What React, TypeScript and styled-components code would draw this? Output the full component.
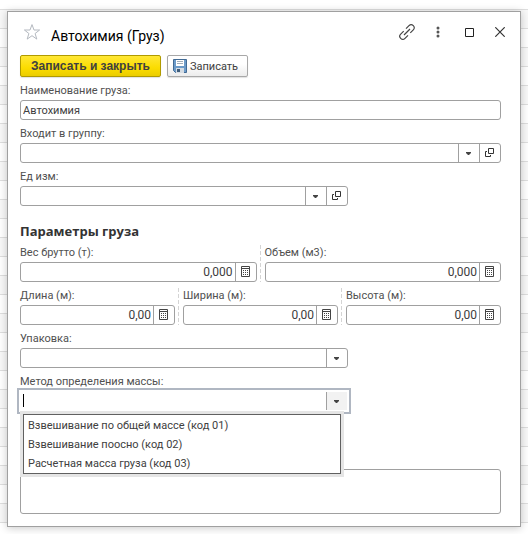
import React, { useId } from "react";
import styled, { createGlobalStyle, css } from "styled-components";

const GlobalStyle = createGlobalStyle`
  *, *::before, *::after { box-sizing: border-box; }
  body {
    margin: 0;
    background: #fff;
    color: #404040;
    font: 11px/17px Roboto, "Liberation Sans", sans-serif;
  }
  button, input, select, textarea { font: inherit; color: inherit; }
`;

const Backdrop = styled.main`
  display: flow-root;
  margin: 9px 0 11px;
  padding: 2px 7px 0;
  background: repeating-linear-gradient(
    #dedede 0 1px,
    #f8f8f8 1px 19px,
    #dedede 19px 20px,
    #fff 20px 38px
  );
`;

const Window = styled.section`
  margin-bottom: -4px;
  padding: 0 19px 12px 12px;
  background: #fff;
  border: 1px solid #a0a0a0;
  box-shadow: 0 1px 8px rgba(0, 0, 0, 0.22);
`;

const TitleBar = styled.header`
  display: flex;
  align-items: center;
  height: 43px;
`;

const Title = styled.h1`
  flex: 1;
  margin: 4px 0 0 7px;
  color: #000;
  font-size: 14px;
  font-weight: 400;
  line-height: 20px;
`;

const IconButton = styled.button`
  display: grid;
  place-items: center;
  flex: none;
  width: 24px;
  height: 24px;
  margin-bottom: 4px;
  padding: 0;
  border: 0;
  background: none;
`;

const WindowTools = styled.div`
  display: flex;
  gap: 7px;
  margin-right: -11px;
`;

const Toolbar = styled.div`
  display: flex;
  gap: 6px;
  margin-bottom: 6px;
`;

const CommandButton = styled.button<{ $primary?: boolean }>`
  display: flex;
  align-items: center;
  gap: 3px;
  height: 22px;
  padding: 0 9px 0 5px;
  border: 1px solid #a8a8a8;
  border-radius: 2px;
  background: linear-gradient(#fff 40%, #ececec);
  box-shadow: 0 1px 1px rgba(0, 0, 0, 0.12);
  ${(p) =>
    p.$primary &&
    css`
      padding: 0 10px;
      border-color: #b09a00;
      background: linear-gradient(#ffe736, #fbdc00 60%, #ebcd00);
      font-family: "Liberation Sans", Arial, sans-serif;
      font-size: 12px;
      font-weight: 700;
    `}
`;

const Form = styled.form`
  display: grid;
  gap: 6px;
`;

const FieldBlock = styled.div<{ $short?: boolean }>`
  min-width: 0;
  max-width: ${(p) => (p.$short ? "328px" : "none")};
`;

const Label = styled.label`
  display: block;
  height: 17px;
  line-height: 16px;
  color: #505050;
`;

const Control = styled.div<{ $focused?: boolean }>`
  position: relative;
  display: flex;
  height: 20px;
  border: 1px solid ${(p) => (p.$focused ? "#fff" : "#a0a0a0")};
  border-radius: ${(p) => (p.$focused ? "0" : "3px")};
  background: #fff;
  ${(p) => p.$focused && "box-shadow: 0 0 0 1px #fff, 0 0 0 3px #b0b7c2;"}
`;

const inputStyle = css`
  flex: 1;
  min-width: 0;
  padding: 0 2px;
  border: 0;
  outline: 0;
  background: none;
`;

const TextInput = styled.input<{ $numeric?: boolean }>`
  ${inputStyle}
  ${(p) => p.$numeric && "font-size: 12px; text-align: right;"}
`;

const SelectInput = styled.select`
  ${inputStyle}
  appearance: none;
`;

const cell = css<{ $active?: boolean }>`
  display: grid;
  place-items: center;
  flex: none;
  width: 21px;
  padding: 0;
  border: 0;
  border-left: 1px solid #a0a0a0;
  background: ${(p) => (p.$active ? "#f2f2f2" : "none")};
`;

const CellButton = styled.button`${cell}`;
const CellMark = styled.span`
  ${cell}
  pointer-events: none;
`;

const GroupTitle = styled.h2`
  margin: 9px 0 -2px;
  color: #333;
  font: 700 13px/20px "Open Sans", "Noto Sans", sans-serif;
`;

const Columns = styled.div`
  display: grid;
  grid-auto-flow: column;
  grid-auto-columns: 1fr;
  gap: 8px;

  & > * + * {
    position: relative;
  }
  & > * + *::before {
    content: "";
    position: absolute;
    left: -5px;
    top: 0;
    bottom: 0;
    width: 1px;
    background: repeating-linear-gradient(#d4d4d4 0 4px, transparent 4px 6px);
  }
`;

const Caret = styled.span`
  position: absolute;
  left: 2px;
  top: 2px;
  width: 1px;
  height: 13px;
  background: #000;
`;

const Menu = styled.ul`
  position: absolute;
  z-index: 1;
  top: 22px;
  left: 2px;
  right: 6px;
  margin: 0;
  padding: 1px 0 0;
  list-style: none;
  border: 1px solid #606060;
  background: #fff;
  box-shadow: 0 0 0 3px #e5e5e5;
`;

const MenuItem = styled.li`
  height: 19px;
  padding: 0 4px;
  line-height: 19px;
`;

const Comment = styled.textarea`
  display: block;
  width: 100%;
  height: 45px;
  margin-top: 52px;
  padding: 2px;
  border: 1px solid #a0a0a0;
  border-radius: 3px;
  outline: 0;
  background: #fff;
  resize: none;
`;

const StarIcon = () => (
  <svg width="18" height="18" viewBox="0 0 18 18" fill="none" stroke="#b4b9c0" aria-hidden="true">
    <path d="M9 1.600 11 7h5.600l-4.500 3.500 1.700 5.600L9 12.700l-4.800 3.400 1.700-5.600L1.400 7H7z" />
  </svg>
);

const LinkIcon = () => (
  <svg width="18" height="18" viewBox="0 0 18 18" fill="none" stroke="#444" strokeWidth="1.2" aria-hidden="true">
    <path d="M6 12l6-6M8 5.600l3-3c1.300-1.300 3-1.300 4.300 0s1.300 3 0 4.300l-3 3M10 12.400l-3 3c-1.300 1.300-3 1.300-4.300 0s-1.300-3 0-4.300l3-3" />
  </svg>
);

const DotsIcon = () => (
  <svg width="4" height="12" viewBox="0 0 4 12" fill="#555" aria-hidden="true">
    <circle cx="2" cy="2" r="1.5" />
    <circle cx="2" cy="6" r="1.5" />
    <circle cx="2" cy="10" r="1.5" />
  </svg>
);

const MaximizeIcon = () => (
  <svg width="10" height="10" viewBox="0 0 10 10" fill="none" stroke="#222" aria-hidden="true">
    <path d="M1.500 1.500h8v8h-8z" />
  </svg>
);

const CloseIcon = () => (
  <svg width="10" height="10" viewBox="0 0 10 10" stroke="#333" strokeWidth="1.2" aria-hidden="true">
    <path d="M.3.3l9.400 9.400M9.700.3.3 9.700" />
  </svg>
);

const SaveIcon = () => (
  <svg width="14" height="14" viewBox="0 0 14 14" aria-hidden="true">
    <path d="M.5.5h13v13h-11l-2-2z" fill="#6c9bc9" stroke="#426a94" />
    <path d="M3 1h8v6H3z" fill="#fff" />
    <path d="M4 2.500h6M4 4.500h6" stroke="#a0adba" />
    <path d="M3 9h8v5H3z" fill="#d5dce3" />
    <path d="M4 10h3v3H4z" fill="#3f5c7a" />
  </svg>
);

const ArrowIcon = () => (
  <svg width="6" height="3" viewBox="0 0 6 3" fill="#444" aria-hidden="true">
    <path d="M0 0h5v1L3 3H2L0 1z" />
  </svg>
);

const OpenIcon = () => (
  <svg width="10" height="10" viewBox="0 0 10 10" fill="none" stroke="#333" aria-hidden="true">
    <path d="M3.500.5h5v5h-5zM2 3.500H.5v5h5V7" />
  </svg>
);

const CalcIcon = () => (
  <svg width="10" height="12" viewBox="0 0 10 12" aria-hidden="true">
    <path d="M.5.5h8v10h-8zM1 2.500h7" fill="none" stroke="#444" />
    <path d="M2 4h1v1H2zM4 4h1v1H4zM6 4h1v1H6zM2 6h1v1H2zM4 6h1v1H4zM6 6h1v1H6zM2 8h1v1H2zM4 8h1v1H4zM6 8h1v1H6z" fill="#444" />
  </svg>
);

const ReferenceField = ({ label, short }: { label: string; short?: boolean }) => {
  const id = useId();
  return (
    <FieldBlock $short={short}>
      <Label htmlFor={id}>{label}</Label>
      <Control>
        <TextInput id={id} />
        <CellButton type="button" aria-label="Выбрать"><ArrowIcon /></CellButton>
        <CellButton type="button" aria-label="Открыть"><OpenIcon /></CellButton>
      </Control>
    </FieldBlock>
  );
};

const NumberField = ({ label, value }: { label: string; value: string }) => {
  const id = useId();
  return (
    <FieldBlock>
      <Label htmlFor={id}>{label}</Label>
      <Control>
        <TextInput id={id} $numeric inputMode="decimal" defaultValue={value} />
        <CellButton type="button" aria-label="Калькулятор"><CalcIcon /></CellButton>
      </Control>
    </FieldBlock>
  );
};

const methods = [
  "Взвешивание по общей массе (код 01)",
  "Взвешивание поосно (код 02)",
  "Расчетная масса груза (код 03)",
];

export default function App() {
  return (
    <>
      <GlobalStyle />
      <Backdrop>
        <Window aria-labelledby="window-title">
          <TitleBar>
            <IconButton type="button" aria-label="В избранное"><StarIcon /></IconButton>
            <Title id="window-title">Автохимия (Груз)</Title>
            <WindowTools>
              <IconButton type="button" aria-label="Ссылка"><LinkIcon /></IconButton>
              <IconButton type="button" aria-label="Ещё"><DotsIcon /></IconButton>
              <IconButton type="button" aria-label="Развернуть"><MaximizeIcon /></IconButton>
              <IconButton type="button" aria-label="Закрыть"><CloseIcon /></IconButton>
            </WindowTools>
          </TitleBar>
          <Toolbar>
            <CommandButton type="button" $primary>Записать и закрыть</CommandButton>
            <CommandButton type="button"><SaveIcon />Записать</CommandButton>
          </Toolbar>
          <Form>
            <FieldBlock>
              <Label htmlFor="name">Наименование груза:</Label>
              <Control><TextInput id="name" defaultValue="Автохимия" /></Control>
            </FieldBlock>
            <ReferenceField label="Входит в группу:" />
            <ReferenceField label="Ед изм:" short />
            <GroupTitle>Параметры груза</GroupTitle>
            <Columns>
              <NumberField label="Вес брутто (т):" value="0,000" />
              <NumberField label="Объем (м3):" value="0,000" />
            </Columns>
            <Columns>
              <NumberField label="Длина (м):" value="0,00" />
              <NumberField label="Ширина (м):" value="0,00" />
              <NumberField label="Высота (м):" value="0,00" />
            </Columns>
            <FieldBlock $short>
              <Label htmlFor="package">Упаковка:</Label>
              <Control>
                <SelectInput id="package"><option value="" /></SelectInput>
                <CellMark><ArrowIcon /></CellMark>
              </Control>
            </FieldBlock>
            <FieldBlock $short>
              <Label htmlFor="method">Метод определения массы:</Label>
              <Control $focused>
                <TextInput id="method" role="combobox" aria-expanded="true" aria-controls="method-list" />
                <Caret />
                <CellButton type="button" $active aria-label="Показать список"><ArrowIcon /></CellButton>
                <Menu id="method-list" role="listbox" aria-label="Метод определения массы">
                  {methods.map((m) => (
                    <MenuItem key={m} role="option" aria-selected="false">{m}</MenuItem>
                  ))}
                </Menu>
              </Control>
            </FieldBlock>
            <Comment aria-label="Комментарий" />
          </Form>
        </Window>
      </Backdrop>
    </>
  );
}
